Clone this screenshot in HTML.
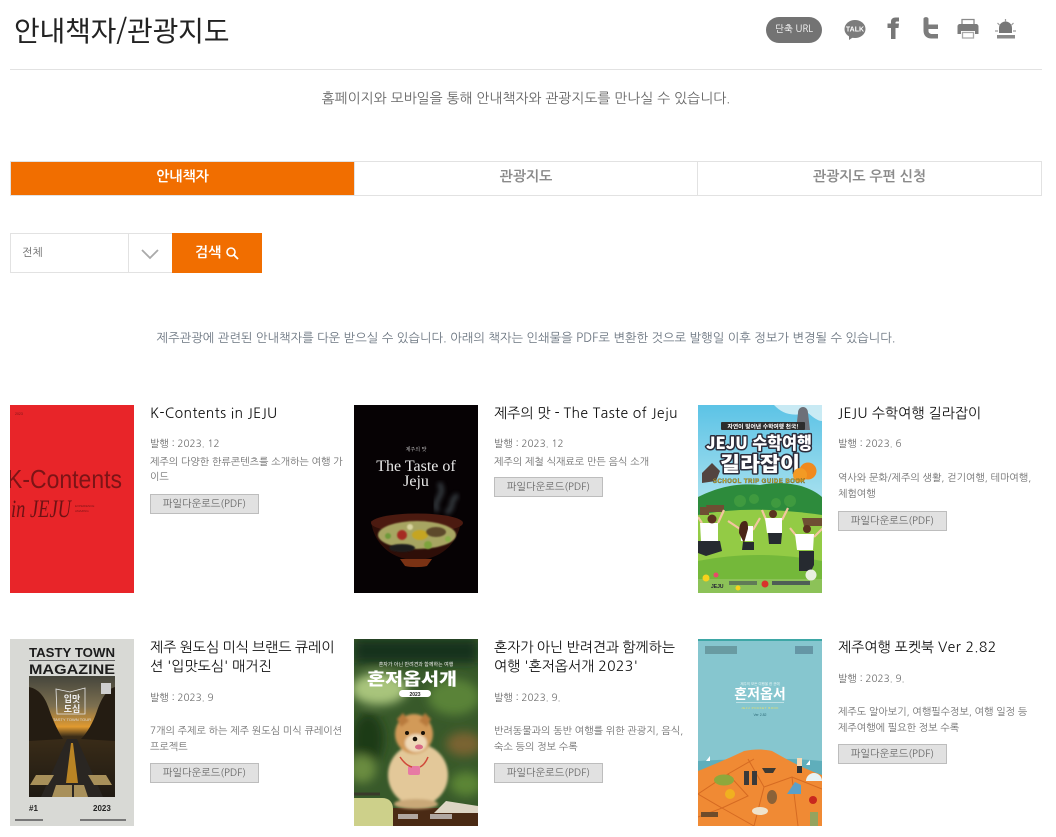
<!DOCTYPE html>
<html lang="ko"><head><meta charset="utf-8"><title>안내책자/관광지도</title>
<style>
html,body{margin:0;padding:0;background:#fff}
body{width:1056px;height:837px;position:relative;overflow:hidden;font-family:"NanumGothic","Liberation Sans","Noto Sans CJK KR",sans-serif;color:#666}
.t{position:absolute;white-space:nowrap}
.ttl{font-size:14px;color:#111;line-height:20px}
.ttl b{font-weight:normal;letter-spacing:.38px}
.d{font-size:10px;color:#6e6e6e;line-height:16px}
.btn{position:absolute;width:107px;height:18px;background:#e1e1e1;border:1px solid #bdbdbd;font-size:10.200px;line-height:18px;text-align:center;color:#666}
.cov{position:absolute;overflow:hidden;display:block}
</style></head><body>
<div class="t" style="left:14px;top:12px;font-size:28px;line-height:36px;color:#222;font-family:'Noto Sans CJK KR','NanumGothic',sans-serif;letter-spacing:-.2px">안내책자/관광지도</div>
<div style="position:absolute;left:10px;top:69px;width:1032px;height:1px;background:#e2e2e2"></div>

<div style="position:absolute;left:766px;top:17px;width:56px;height:26px;border-radius:13px;background:#737373;color:#fff;font-size:9.500px;line-height:26px;text-align:center">단축 URL</div>
<svg style="position:absolute;left:840px;top:15px" width="190" height="30" viewBox="840 15 190 30">
<ellipse cx="855" cy="29" rx="10.500" ry="9" fill="#7c7c7c"/><path d="M849 35l0 5 6-4z" fill="#7c7c7c"/>
<text x="855" y="31.500" font-size="7" font-weight="bold" fill="#fff" text-anchor="middle" font-family="Liberation Sans">TALK</text>
<path d="M891 39V28h-3.500v-4.500H891v-2c0-2.500 1.800-4 4.500-4h3.500v4h-2.200c-1 0-1.300.5-1.300 1.400v.6h3.500l-.5 4.500h-3v11z" fill="#777"/>
<path d="M923.500 19v11.500c0 5 3 8 8 8h6.500v-4.500h-6c-2 0-3.500-1.200-3.500-3V29h9.500v-4.500H928.500V19c0-2.500-5-2.500-5 0z" fill="#7c7c7c"/>
<path d="M962 28v-8.500h12V28" fill="none" stroke="#8a8a8a" stroke-width="1.300"/>
<path d="M960 24h16c1.500 0 2.500 1 2.500 2.500V34h-3.500v-3h-14v3h-3.500v-7.500c0-1.500 1-2.500 2.500-2.500z" fill="#7c7c7c"/>
<path d="M962.500 32.500h11V38h-11z" fill="none" stroke="#a8a8a8" stroke-width="1.300"/>
<path d="M999 33v-5a6.500 6.500 0 0 1 13 0v5z" fill="#777"/>
<rect x="997" y="35" width="18" height="3.500" fill="#8a8a8a"/>
<path d="M1005.500 19v3M997.500 23l2 2M1013.500 23l-2 2M995 31h3M1013 31h3" stroke="#9a9a9a" stroke-width="1.200"/>
</svg>

<div class="t" style="left:0;width:1052px;top:89px;text-align:center;font-size:13.850px;line-height:18px;color:#666">홈페이지와 모바일을 통해 안내책자와 관광지도를 만나실 수 있습니다.</div>

<div style="position:absolute;left:10px;top:161px;width:1030px;height:33px;border:1px solid #e2e2e2"></div>
<div style="position:absolute;left:11px;top:162px;width:343px;height:33px;background:#f16e00;color:#fff;font-size:14px;font-weight:bold;line-height:31px;text-align:center">안내책자</div>
<div style="position:absolute;left:354px;top:162px;width:344px;height:33px;border-left:1px solid #e2e2e2;border-right:1px solid #e2e2e2;box-sizing:border-box;color:#8a8a8a;font-size:14px;font-weight:bold;line-height:31px;text-align:center">관광지도</div>
<div style="position:absolute;left:698px;top:162px;width:343px;height:33px;color:#8a8a8a;font-size:14px;font-weight:bold;line-height:31px;text-align:center">관광지도 우편 신청</div>

<div style="position:absolute;left:10px;top:233px;width:161px;height:38px;border:1px solid #e2e2e2"></div>
<div style="position:absolute;left:128px;top:234px;width:1px;height:38px;background:#e2e2e2"></div>
<div class="t" style="left:22px;top:245px;font-size:11px;line-height:16px;color:#666">전체</div>
<svg style="position:absolute;left:140px;top:247px" width="20" height="14"><path d="M2 3l8 8 8-8" fill="none" stroke="#aaa" stroke-width="1.800"/></svg>
<div style="position:absolute;left:172px;top:233px;width:90px;height:40px;background:#f16e00"></div>
<div class="t" style="left:195px;top:244px;font-size:14px;font-weight:bold;line-height:18px;color:#fff">검색</div>
<svg style="position:absolute;left:225px;top:246px" width="14" height="14"><circle cx="6" cy="6" r="4" fill="none" stroke="#fff" stroke-width="1.600"/><path d="M9 9l4 4" stroke="#fff" stroke-width="1.800"/></svg>

<div class="t" style="left:0;width:1052px;top:329px;text-align:center;font-size:12.300px;line-height:18px;color:#6b7580">제주관광에 관련된 안내책자를 다운 받으실 수 있습니다. 아래의 책자는 인쇄물을 PDF로 변환한 것으로 발행일 이후 정보가 변경될 수 있습니다.</div>

<!-- cover 1 -->
<svg class="cov" style="left:10px;top:405px" width="124" height="188" viewBox="0 0 124 188">
<rect width="124" height="188" fill="#e82529"/>
<text x="5" y="10" font-size="3.500" fill="#7a1517" font-family="Liberation Sans">2023</text>
<text x="-3" y="83" font-size="26" fill="#7c1416" font-family="Liberation Sans" textLength="115" lengthAdjust="spacingAndGlyphs">K-Contents</text>
<text x="1" y="112" font-size="25" font-style="italic" fill="#6e1214" font-family="Liberation Serif" textLength="60" lengthAdjust="spacingAndGlyphs">in JEJU</text>
<text x="65" y="102" font-size="3" fill="#7a1517" font-family="Liberation Sans">EXPERIENCE</text>
<text x="65" y="107" font-size="3" fill="#7a1517" font-family="Liberation Sans">AMAZING</text>
</svg>
<div class="t ttl" style="left:150px;top:404px"><b>K-Contents in JEJU</b></div>
<div class="t d" style="left:150px;top:436px">발행 : 2023. 12</div>
<div class="t d" style="left:150px;top:454px">제주의 다양한 한류콘텐츠를 소개하는 여행 가</div>
<div class="t d" style="left:150px;top:469px">이드</div>
<div class="btn" style="left:150px;top:494px">파일다운로드(PDF)</div>

<!-- cover 2 -->
<svg class="cov" style="left:354px;top:405px" width="124" height="188" viewBox="0 0 124 188">
<defs><filter id="b1"><feGaussianBlur stdDeviation=".8"/></filter><filter id="b3"><feGaussianBlur stdDeviation="2.500"/></filter></defs>
<rect width="124" height="188" fill="#060204"/>
<text x="62" y="46" font-size="5" fill="#ddd" text-anchor="middle" font-family="Noto Serif CJK SC">제주의 맛</text>
<text x="62" y="66" font-size="16" fill="#e8e8e8" text-anchor="middle" font-family="Liberation Serif">The Taste of</text>
<text x="62" y="81" font-size="16" fill="#e8e8e8" text-anchor="middle" font-family="Liberation Serif">Jeju</text>
<path d="M84 106c-8-10 10-16 1-28M92 108c10-6 2-12 12-18" fill="none" stroke="#4f5a60" stroke-width="5" opacity=".65" filter="url(#b3)"/>
<path d="M17 116c3 24 22 39 45 39s42-15 45-39z" fill="#2e0e08"/>
<path d="M46 154h32l-5 7c-6 1.500-16 1.500-22 0z" fill="#7a3214"/>
<ellipse cx="63" cy="118" rx="46" ry="9.500" fill="#4b1a10"/>
<ellipse cx="63" cy="130" rx="39" ry="14" fill="#a7a562" filter="url(#b1)"/>
<g filter="url(#b1)">
<circle cx="48" cy="130" r="5" fill="#a52a22"/>
<ellipse cx="48" cy="143" rx="13" ry="4" fill="#1e1d1e"/>
<ellipse cx="66" cy="130" rx="8" ry="5" fill="#c5a522"/>
<ellipse cx="82" cy="127" rx="10" ry="5" fill="#5d4a2a"/>
<circle cx="34" cy="131" r="3" fill="#6e9a3a"/><circle cx="74" cy="140" r="4" fill="#7ea33c"/><circle cx="94" cy="134" r="3" fill="#8aae48"/><circle cx="56" cy="122" r="3" fill="#d9d4a0"/>
</g>
</svg>
<div class="t ttl" style="left:494px;top:404px">제주의 맛 - <b>The Taste of Jeju</b></div>
<div class="t d" style="left:494px;top:436px">발행 : 2023. 12</div>
<div class="t d" style="left:494px;top:454px">제주의 제철 식재료로 만든 음식 소개</div>
<div class="btn" style="left:494px;top:477px">파일다운로드(PDF)</div>

<!-- cover 3 -->
<svg class="cov" style="left:698px;top:405px" width="124" height="188" viewBox="0 0 124 188">
<defs><linearGradient id="sky" x1="0" y1="0" x2="0" y2="1"><stop offset="0" stop-color="#5cc3e6"/><stop offset="1" stop-color="#a7e0ee"/></linearGradient></defs>
<rect width="124" height="95" fill="url(#sky)"/>
<path d="M76 0c8 8 16 12 34 8 6 5 10 8 14 8V0z" fill="#e4f4f8" opacity=".8"/>
<path d="M0 92C24 80 44 78 62 80c20-4 46-2 62 12v30H0z" fill="#2d8b3c"/>
<path d="M0 110c40-8 80-6 124 0v78H0z" fill="#93cb45"/>
<path d="M0 156c40-8 80-8 124 0v32H0z" fill="#74b83a"/>
<g fill="#3f9a3f"><circle cx="42" cy="96" r="6"/><circle cx="56" cy="94" r="5"/><circle cx="92" cy="96" r="6"/><circle cx="78" cy="98" r="5"/></g>
<path d="M8 100h18v7H10zM2 102h9v8H2zM104 113h20v8h-18z" fill="#6e4f33"/>
<path d="M100 8c0-8 10-8 10 0l2 17h-14z" fill="#6d7078"/>
<rect x="23" y="17" width="84" height="8" rx="1" fill="#2d2d2d"/>
<text x="65" y="23.500" font-size="5.800" font-weight="bold" fill="#fff" text-anchor="middle" font-family="Noto Sans CJK KR">자연이 빚어낸 수학여행 천국!</text>
<g font-family="Noto Sans CJK KR" font-weight="900" text-anchor="middle" stroke-linejoin="round">
<text x="61" y="44" font-size="17" fill="#fff" stroke="#2c2c3a" stroke-width="3" paint-order="stroke" textLength="106" lengthAdjust="spacingAndGlyphs">JEJU 수학여행</text>
<text x="62" y="66" font-size="20" fill="#fff" stroke="#2c2c3a" stroke-width="3" paint-order="stroke" textLength="80" lengthAdjust="spacingAndGlyphs">길라잡이</text>
</g>
<circle cx="110" cy="66" r="8.500" fill="#f08a1e"/><circle cx="102" cy="70" r="7" fill="#f39a24"/>
<path d="M4 68l10-10 8 8-4 10-14 2z" fill="#53443f"/>
<text x="61" y="78" font-size="6" font-weight="bold" fill="#f9d21c" stroke="#333" stroke-width=".3" text-anchor="middle" font-family="Liberation Sans" textLength="92" lengthAdjust="spacing">SCHOOL TRIP GUIDE BOOK</text>
<path d="M0 112l4 6M20 118l6-13M30 116l12 8M62 113l-7 12M64 105l5 12M90 103l-6 12M92 123l8 10M128 120l-12 12" stroke="#f3c5a0" stroke-width="2.200"/>
<g fill="#fff"><path d="M2 118h18v18H3zM42 121h13v15H43zM67 113h17v15H69zM97 129h19l-1 16H99z"/></g>
<g fill="#5a3320"><circle cx="14" cy="114" r="4.500"/><circle cx="75" cy="109" r="4"/><circle cx="109" cy="124" r="4"/></g>
<path d="M41 128c0-10 3-12 6-12s3 4 3 8l-4 14z" fill="#4a2518"/>
<g fill="#262a30"><path d="M0 136h22l2 10-16 5-8-3zM45 137h11v8H44zM70 128h14l-1 11H71zM101 146h15v14l-3 6h-12z"/></g>
<rect y="174" width="124" height="14" fill="#8cc258"/>
<circle cx="8" cy="173" r="3.500" fill="#f7d21c"/><circle cx="113" cy="170" r="5.500" fill="#e8f0e0"/><circle cx="18" cy="170" r="2.500" fill="#e84a6a"/><circle cx="40" cy="183" r="2.500" fill="#f7d21c"/>
<circle cx="67" cy="179" r="3.500" fill="#d9342b"/>
<text x="13" y="183" font-size="5" font-weight="bold" fill="#223" font-family="Liberation Sans">JEJU</text>
<rect x="74" y="176" width="38" height="4" fill="#335" opacity=".7"/><rect x="31" y="176" width="28" height="4" fill="#335" opacity=".5"/>
</svg>
<div class="t ttl" style="left:838px;top:404px"><b>JEJU</b> 수학여행 길라잡이</div>
<div class="t d" style="left:838px;top:436px">발행 : 2023. 6</div>
<div class="t d" style="left:838px;top:470px">역사와 문화/제주의 생활, 걷기여행, 테마여행,</div>
<div class="t d" style="left:838px;top:486px">체험여행</div>
<div class="btn" style="left:838px;top:511px">파일다운로드(PDF)</div>

<!-- cover 4 -->
<svg class="cov" style="left:10px;top:639px" width="124" height="187" viewBox="0 0 124 187">
<defs><linearGradient id="dusk" x1="0" y1="0" x2="0" y2="1"><stop offset="0" stop-color="#45453c"/><stop offset=".25" stop-color="#7d7050"/><stop offset=".42" stop-color="#e09a30"/><stop offset=".5" stop-color="#3a2c18"/><stop offset="1" stop-color="#1f1a13"/></linearGradient></defs>
<rect width="124" height="187" fill="#d8d9d5"/>
<text x="19" y="18" font-size="13" font-weight="bold" fill="#1c1c1c" font-family="Liberation Sans" textLength="86" lengthAdjust="spacingAndGlyphs">TASTY TOWN</text>
<text x="19" y="35" font-size="14" font-weight="bold" fill="#1c1c1c" font-family="Liberation Sans" textLength="86" lengthAdjust="spacingAndGlyphs">MAGAZINE</text>
<rect x="19" y="21" width="86" height="1" fill="#666"/>
<rect x="19" y="37" width="86" height="121" fill="url(#dusk)"/>
<path d="M19 48c10 2 16 10 20 22s10 24 14 30l-34 2zM105 48c-8 2-14 12-18 24s-10 22-16 28l34 2z" fill="#241c12"/>
<path d="M57 100h10l26 58H31z" fill="#2a2622"/>
<path d="M61 104h2l5 40H56z" fill="#b98424"/>
<path d="M26 136h18l-6 10H20zM78 136h18l6 10H84zM46 146h16v12H42zM64 146h10l4 12H64z" fill="#a8905a"/>
<path d="M46 50l14 3 15-4v26H47z" fill="none" stroke="#e8e8e8" stroke-width=".8"/>
<text x="62" y="63" font-size="9" font-weight="bold" fill="#eee" text-anchor="middle" font-family="Noto Sans CJK KR">입맛</text>
<text x="62" y="73" font-size="9" font-weight="bold" fill="#eee" text-anchor="middle" font-family="Noto Sans CJK KR">도심</text>
<rect x="91" y="44" width="10" height="11" fill="#cfcfcf"/>
<text x="62" y="82" font-size="4" fill="#ddd" text-anchor="middle" font-family="Liberation Sans">TASTY TOWN TOUR</text>
<text x="19" y="172" font-size="8" font-weight="bold" fill="#222" font-family="Liberation Sans">#1</text>
<text x="83" y="172" font-size="8" font-weight="bold" fill="#222" font-family="Liberation Sans">2023</text>
<rect x="5" y="180" width="28" height="2" fill="#777"/><rect x="70" y="180" width="46" height="2" fill="#777"/>
</svg>
<div class="t ttl" style="left:150px;top:638px;word-spacing:-.6px">제주 원도심 미식 브랜드 큐레이</div>
<div class="t ttl" style="left:150px;top:657px">션 '입맛도심' 매거진</div>
<div class="t d" style="left:150px;top:690px">발행 : 2023. 9</div>
<div class="t d" style="left:150px;top:723px">7개의 주제로 하는 제주 원도심 미식 큐레이션</div>
<div class="t d" style="left:150px;top:739px">프로젝트</div>
<div class="btn" style="left:150px;top:763px">파일다운로드(PDF)</div>

<!-- cover 5 -->
<svg class="cov" style="left:354px;top:639px" width="124" height="187" viewBox="0 0 124 187">
<defs><filter id="b4"><feGaussianBlur stdDeviation="5"/></filter><filter id="b5"><feGaussianBlur stdDeviation="1.200"/></filter></defs>
<rect width="124" height="187" fill="#38592a"/>
<g filter="url(#b4)">
<rect width="124" height="24" fill="#14301a"/>
<ellipse cx="25" cy="50" rx="28" ry="16" fill="#a8c47c"/>
<ellipse cx="100" cy="58" rx="26" ry="18" fill="#5a8338"/>
<ellipse cx="14" cy="100" rx="16" ry="26" fill="#1f3a18"/>
<ellipse cx="110" cy="105" rx="18" ry="12" fill="#7a6432"/>
<ellipse cx="112" cy="145" rx="16" ry="12" fill="#5c8534"/>
<ellipse cx="8" cy="130" rx="14" ry="14" fill="#6a8c40"/>
</g>
<rect x="0" y="169" width="124" height="18" fill="#4a2a14"/>
<path d="M92 162l32 5v7H80z" fill="#ddd5c4"/>
<g filter="url(#b5)">
<ellipse cx="64" cy="136" rx="30" ry="31" fill="#e3c899"/>
<ellipse cx="60" cy="95" rx="19" ry="20" fill="#d29a58"/>
<ellipse cx="62" cy="104" rx="11" ry="9" fill="#efd9b8"/>
<path d="M43 80l6-6 6 8-8 6zM77 80l-6-6-6 8 8 6z" fill="#b87a3c"/>
<ellipse cx="62" cy="165" rx="22" ry="5" fill="#c9a878"/>
</g>
<circle cx="53" cy="94" r="2" fill="#1a1208"/><circle cx="69" cy="94" r="2" fill="#1a1208"/><circle cx="61" cy="100" r="2.300" fill="#1a1208"/>
<ellipse cx="65" cy="108" rx="4" ry="2.500" fill="#d86a86"/>
<rect x="54" y="127" width="12" height="9" rx="2" fill="#e77aa4"/>
<path d="M46 118c4 6 8 9 12 10M74 118c-2 5-4 8-8 10" stroke="#d04a3a" stroke-width="1.500" fill="none"/>
<path d="M0 159h28c7 0 11 4 11 11v17H0z" fill="#cdd08a"/>
<path d="M0 155h26" stroke="#3a3a2a" stroke-width="3"/>
<text x="62" y="27" font-size="5" fill="#eee" text-anchor="middle" font-family="Noto Sans CJK KR">혼자가 아닌 반려견과 함께하는 여행</text>
<text x="58" y="46" font-size="17" font-weight="900" fill="#fff" text-anchor="middle" font-family="Noto Sans CJK KR" textLength="90" lengthAdjust="spacingAndGlyphs">혼저옵서개</text>
<rect x="45" y="51" width="32" height="7" rx="3.500" fill="#fff"/>
<text x="61" y="57" font-size="5" font-weight="bold" fill="#222" text-anchor="middle" font-family="Liberation Sans">2023</text>
<rect x="44" y="175" width="20" height="5" fill="#ddd" opacity=".7"/><rect x="76" y="175" width="22" height="5" fill="#ddd" opacity=".7"/>
</svg>
<div class="t ttl" style="left:494px;top:638px;word-spacing:-.6px">혼자가 아닌 반려견과 함께하는</div>
<div class="t ttl" style="left:494px;top:657px">여행 '혼저옵서개 <b>2023</b>'</div>
<div class="t d" style="left:494px;top:690px">발행 : 2023. 9.</div>
<div class="t d" style="left:494px;top:723px">반려동물과의 동반 여행를 위한 관광지, 음식,</div>
<div class="t d" style="left:494px;top:739px">숙소 등의 정보 수록</div>
<div class="btn" style="left:494px;top:763px">파일다운로드(PDF)</div>

<!-- cover 6 -->
<svg class="cov" style="left:698px;top:639px" width="124" height="187" viewBox="0 0 124 187">
<rect width="124" height="187" fill="#86c6cf"/>
<rect width="124" height="2" fill="#3ea7a6"/>
<path d="M0 122c30-2 90-4 124 0v20H0z" fill="#5faebb"/>
<path d="M0 132C20 124 38 116 46 112c10-2 20-2 28 0 14 8 32 18 50 24v51H0z" fill="#f08a34"/>
<path d="M0 155l30-20 20 22-26 12zM50 120l16 28 28-10 30 12M66 148l-10 39M94 138l6 49M30 135l26-15M0 178l24-9 32 18" fill="none" stroke="#d56a22" stroke-width="1"/>
<ellipse cx="26" cy="141" rx="10" ry="5.500" fill="#8ea83c"/>
<path d="M46 132h5v14h-5zM54 132h5v14h-5z" fill="#3a3a3a"/>
<path d="M64 129h14l-3 5h-8z" fill="#3d3a33"/>
<rect x="99" y="119" width="5" height="14" fill="#f4d9b5"/><rect x="99" y="127" width="5" height="7" fill="#333"/>
<path d="M89 155l8-12 6 3v9z" fill="#5aa0c8"/>
<ellipse cx="74" cy="158" rx="5" ry="7" fill="#8b6238"/>
<circle cx="32" cy="155" r="5" fill="#f0b020"/>
<circle cx="115" cy="161" r="4" fill="#c8281e"/>
<path d="M108 142a8 8 0 0 1 16 0z" fill="#e8f3f5"/>
<ellipse cx="62" cy="172" rx="8" ry="4" fill="#efe3cc"/>
<rect x="3" y="173" width="17" height="5" fill="#6e4b2a"/>
<path d="M112 173h8v14h-8z" fill="#6cae72" opacity=".7"/>
<path d="M8 122l4-5v5zM108 126l4-5v5z" fill="#fff"/>
<text x="62" y="46" font-size="3.500" fill="#e8f5f5" text-anchor="middle" font-family="Noto Sans CJK KR">제주의 모든 여행을 한 권에</text>
<text x="62" y="60" font-size="14" font-weight="bold" fill="#fff" text-anchor="middle" font-family="Noto Sans CJK KR">혼저옵서</text>
<rect x="38" y="63" width="48" height=".7" fill="#d6ecee"/>
<text x="62" y="70" font-size="3" fill="#e8e06a" text-anchor="middle" font-family="Liberation Sans" letter-spacing=".5">JEJU POCKET BOOK</text>
<text x="62" y="77" font-size="3.500" fill="#2c6a77" text-anchor="middle" font-family="Liberation Sans">Ver 2.82</text>
<rect x="7" y="7" width="32" height="8" fill="#3e5a5f" opacity=".4"/><rect x="97" y="7" width="18" height="8" fill="#3e5a70" opacity=".45"/>
</svg>
<div class="t ttl" style="left:838px;top:638px">제주여행 포켓북 <b>Ver 2.82</b></div>
<div class="t d" style="left:838px;top:671px">발행 : 2023. 9.</div>
<div class="t d" style="left:838px;top:704px">제주도 알아보기, 여행필수정보, 여행 일정 등</div>
<div class="t d" style="left:838px;top:720px">제주여행에 필요한 정보 수록</div>
<div class="btn" style="left:838px;top:744px">파일다운로드(PDF)</div>
</body></html>
